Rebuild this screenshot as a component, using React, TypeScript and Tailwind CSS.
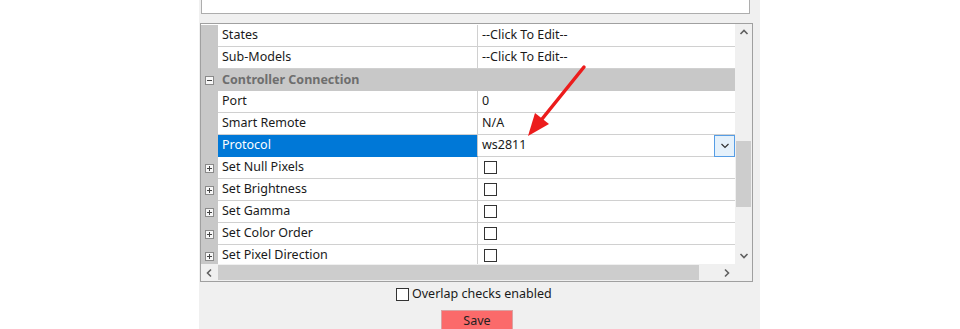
import React from "react";

type Row =
  | { kind: "prop"; name: string; value?: string; check?: boolean; expand?: boolean; selected?: boolean; combo?: boolean }
  | { kind: "cat"; name: string };

const rows: Row[] = [
  { kind: "prop", name: "States", value: "--Click To Edit--" },
  { kind: "prop", name: "Sub-Models", value: "--Click To Edit--" },
  { kind: "cat", name: "Controller Connection" },
  { kind: "prop", name: "Port", value: "0" },
  { kind: "prop", name: "Smart Remote", value: "N/A" },
  { kind: "prop", name: "Protocol", value: "ws2811", selected: true, combo: true },
  { kind: "prop", name: "Set Null Pixels", check: true, expand: true },
  { kind: "prop", name: "Set Brightness", check: true, expand: true },
  { kind: "prop", name: "Set Gamma", check: true, expand: true },
  { kind: "prop", name: "Set Color Order", check: true, expand: true },
  { kind: "prop", name: "Set Pixel Direction", check: true, expand: true },
];

function ExpandBox({ minus = false }: { minus?: boolean }) {
  return (
    <svg width="9" height="9" viewBox="0 0 9 9">
      <rect x="0.5" y="0.5" width="8" height="8" fill="#f7f7f7" stroke="#8a8a8a" />
      <path d="M2 4.5h5" stroke="#444" />
      {!minus && <path d="M4.5 2v5" stroke="#444" />}
    </svg>
  );
}

function Chevron({ dir }: { dir: "up" | "down" | "left" | "right" }) {
  const d = {
    up: "M1.5 6 L5 2.5 L8.5 6",
    down: "M1.5 3 L5 6.5 L8.5 3",
    left: "M6 1.5 L2.5 5 L6 8.5",
    right: "M3 1.5 L6.5 5 L3 8.5",
  }[dir];
  return (
    <svg width="10" height="10" viewBox="0 0 10 10">
      <path d={d} fill="none" stroke="#606060" strokeWidth="1.6" />
    </svg>
  );
}

function CheckBox() {
  return <div className="w-[13px] h-[13px] border border-[#333333] bg-white" />;
}

function GridRow({ row }: { row: Row }) {
  if (row.kind === "cat") {
    return (
      <div className="flex h-[22px] shrink-0 bg-[#c8c8c8] items-center">
        <div className="w-[17px] flex justify-center">
          <ExpandBox minus />
        </div>
        <div className="pl-[4px] font-bold text-[#6e6e6e]">{row.name}</div>
      </div>
    );
  }
  return (
    <div className="flex h-[22px] shrink-0">
      <div className="w-[17px] bg-[#c8c8c8] flex items-center justify-center">
        {row.expand && <ExpandBox />}
      </div>
      <div
        className={
          row.selected
            ? "w-[260px] border-r border-b border-r-[#c8c8c8] border-b-[#0078d7] bg-[#0078d7] text-white pl-[4px] flex items-center"
            : "w-[260px] border-r border-b border-[#d0d0d0] pl-[4px] flex items-center text-[#1a1a1a]"
        }
      >
        {row.name}
      </div>
      <div className="flex-1 border-b border-[#d0d0d0] pl-[6px] flex items-center text-[#1a1a1a] relative">
        {row.check ? <CheckBox /> : <span className="-ml-[2px]">{row.value}</span>}
        {row.combo && (
          <div className="absolute right-0 top-0 w-[21px] h-[22px] border border-[#569de5] bg-[#e5f1fb] flex items-center justify-center">
            <svg width="10" height="6" viewBox="0 0 10 6">
              <path d="M1.5 1 L5 4.5 L8.5 1" fill="none" stroke="#333" strokeWidth="1.2" />
            </svg>
          </div>
        )}
      </div>
    </div>
  );
}

export default function App() {
  return (
    <div
      className="relative w-[960px] h-[329px] bg-white flex overflow-hidden text-[12.5px]"
      style={{ fontFamily: '"Noto Sans", "Liberation Sans", sans-serif' }}
    >
      <div className="ml-[199px] w-[561px] h-full bg-[#f0f0f0] flex flex-col">
        <div className="ml-[2px] w-[549px] h-[14px] shrink-0 bg-white border border-t-0 border-[#adadad]" />

        <div className="mt-[9px] ml-[1px] w-[553px] h-[259px] shrink-0 border border-[#a0a0a0] bg-white flex">
          <div className="w-[534px] flex flex-col">
            <div className="h-[240px] pt-[1px] overflow-hidden flex flex-col">
              {rows.map((r) => (
                <GridRow key={r.name} row={r} />
              ))}
            </div>
            <div className="h-[17px] flex bg-[#f0f0f0]">
              <div className="w-[17px] flex items-center justify-center">
                <Chevron dir="left" />
              </div>
              <div className="w-[481px] my-[1px] bg-[#cdcdcd]" />
              <div className="flex-1" />
              <div className="w-[17px] flex items-center justify-center">
                <Chevron dir="right" />
              </div>
            </div>
          </div>
          <div className="w-[17px] flex flex-col bg-[#f0f0f0]">
            <div className="h-[17px] flex items-center justify-center">
              <Chevron dir="up" />
            </div>
            <div className="mt-[100px] mx-[1px] h-[66px] bg-[#cdcdcd]" />
            <div className="flex-1" />
            <div className="h-[17px] mb-[17px] flex items-center justify-center">
              <Chevron dir="down" />
            </div>
          </div>
        </div>

        <div className="mt-[3px] ml-[197px] flex items-center gap-[3px] text-[#1a1a1a]">
          <CheckBox />
          <span>Overlap checks enabled</span>
        </div>

        <div className="mt-[6px] ml-[242px] w-[72px] h-[23px] shrink-0 bg-[#fb6a6a] border border-[#d9a3a3] flex items-center justify-center text-[#222]">
          Save
        </div>
      </div>

      <svg className="absolute left-0 top-0 pointer-events-none" width="960" height="329">
        <line x1="584" y1="67" x2="538" y2="124" stroke="#ec1c1c" strokeWidth="3.5" strokeLinecap="round" />
        <polygon points="528,136 535,113 549,124" fill="#ec1c1c" />
      </svg>
    </div>
  );
}
